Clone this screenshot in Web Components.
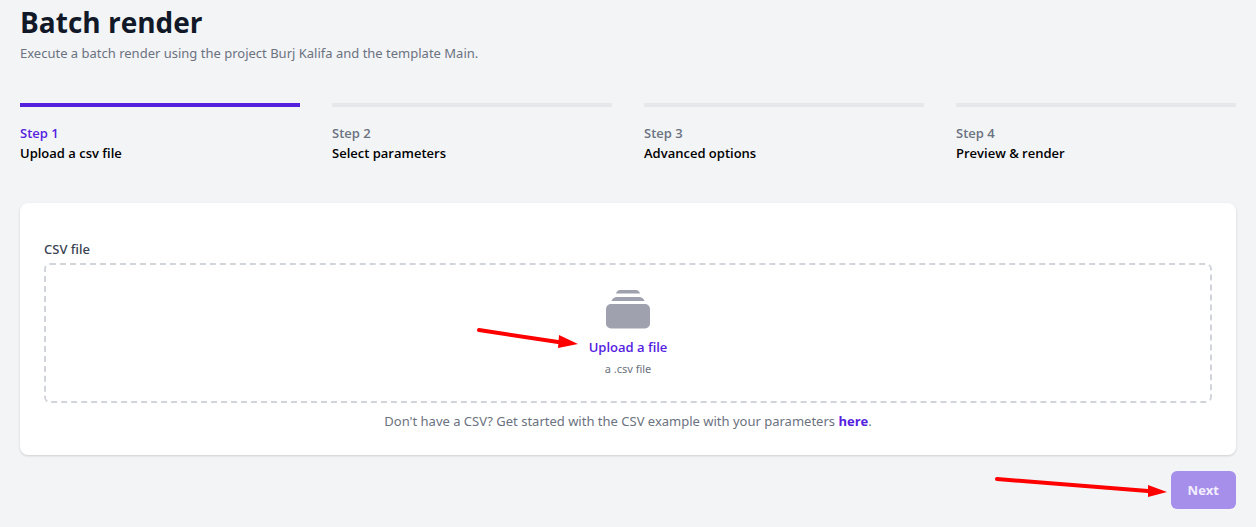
<!DOCTYPE html>
<html lang="en">
<head>
<meta charset="utf-8">
<meta name="viewport" content="width=device-width, initial-scale=1">
<title>Batch render</title>
<style>
  body {
    margin: 0;
    background: #f3f4f6;
    color: #000;
    font: 13px/20px "Noto Sans", "Open Sans", sans-serif;
    --accent: #5521df;
    --muted: #6b7280;
    --strong: "Open Sans", "Noto Sans", sans-serif;
  }
</style>
</head>
<body>
<batch-page></batch-page>
<script>
const define = (name, html) => customElements.define(name, class extends HTMLElement {
  constructor() {
    super();
    this.attachShadow({ mode: "open" }).innerHTML = html;
  }
});

define("page-heading", `
  <style>
    :host { display: block; }
    h1 { margin: 0; font-family: var(--strong); font-size: 28px; line-height: 36px; font-weight: 700; color: #111827; }
    p { margin: 0; padding-top: 3px; color: var(--muted); }
  </style>
  <h1><slot name="title"></slot></h1>
  <p><slot></slot></p>`);

define("step-item", `
  <style>
    :host { display: block; flex: 1; font-family: var(--strong); font-weight: 600; --bar: #e5e7eb; --label: var(--muted); }
    :host([current]) { --bar: var(--accent); --label: var(--accent); }
    a { display: flex; flex-direction: column; padding-top: 16px; border-top: 4px solid var(--bar); color: inherit; text-decoration: none; }
    .label { color: var(--label); }
  </style>
  <a href="#"><span class="label"><slot name="label"></slot></span><span><slot></slot></span></a>`);

define("step-list", `
  <style>
    :host { display: block; }
    nav { display: flex; gap: 32px; }
  </style>
  <nav aria-label="Progress"><slot></slot></nav>`);

define("file-drop", `
  <style>
    :host { display: block; }
    .name { display: block; font-weight: 500; color: #374151; }
    .zone { margin-top: 4px; padding: 24px; border: 2px dashed #d1d5db; border-radius: 6px; display: flex; flex-direction: column; align-items: center; }
    svg { width: 48px; height: 48px; fill: #9fa1ae; }
    .pick { position: relative; font-family: var(--strong); font-weight: 600; color: var(--accent); cursor: pointer; }
    input { position: absolute; width: 1px; height: 1px; margin: 0; opacity: 0; }
    .hint { margin: 0; padding-top: 4px; font-size: 11px; line-height: 16px; color: var(--muted); }
  </style>
  <label class="name" for="file"><slot name="name"></slot></label>
  <div class="zone">
    <svg viewBox="0 0 48 48" aria-hidden="true">
      <path d="M12 4.600Q13 1 16 1H32Q35 1 36 4.600Z"/>
      <path d="M7.500 12Q9 8 13 8H35Q39 8 40.500 12Z"/>
      <rect x="2" y="15" width="44" height="24.500" rx="5"/>
    </svg>
    <label class="pick"><slot></slot><input id="file" type="file" accept=".csv"></label>
    <p class="hint"><slot name="hint"></slot></p>
  </div>`);

define("form-card", `
  <style>
    :host { display: block; padding: 36px 24px 24px; background: #fff; border-radius: 8px; box-shadow: 0 1px 3px #0000001a, 0 1px 2px #0000000f; }
  </style>
  <slot></slot>`);

define("next-button", `
  <style>
    :host { display: flex; }
    button { padding: 8px 16px; border: 1px solid transparent; border-radius: 6px; background: #a68feb; color: #f2eefc; font: 700 13px/20px var(--strong); }
  </style>
  <button type="button" disabled><slot></slot></button>`);

define("pointer-arrow", `
  <style>
    :host { position: absolute; pointer-events: none; }
    svg { display: block; overflow: visible; fill: #f00; stroke: #f00; stroke-linecap: round; }
    :host([kind="next"]) .upload, :host([kind="upload"]) .next { display: none; }
  </style>
  <svg class="upload" width="102" height="22" aria-hidden="true">
    <path d="M3 3L82 15" stroke-width="4"/><path d="M83 8L102 17L82 21Z" stroke="none"/>
  </svg>
  <svg class="next" width="172" height="20" aria-hidden="true">
    <path d="M2 3L153 15" stroke-width="4"/><path d="M153 9L172 16L153 21Z" stroke="none"/>
  </svg>`);

define("batch-page", `
  <style>
    :host { display: block; padding: 4px 20px 18px; }
    step-list { margin: 40px 0; }
    .upload, .actions { position: relative; }
    .example { margin: 0; padding-top: 8px; text-align: center; color: var(--muted); }
    .example a { color: var(--accent); font-family: var(--strong); font-weight: 700; text-decoration: none; }
    .actions { display: flex; justify-content: flex-end; margin-top: 16px; }
    [kind="upload"] { top: 88px; right: calc(50% + 50px); }
    [kind="next"] { top: 5px; right: 69px; }
  </style>
  <main>
    <page-heading><span slot="title">Batch render</span>Execute a batch render using the project Burj Kalifa and the template Main.</page-heading>
    <step-list>
      <step-item current><span slot="label">Step 1</span>Upload a csv file</step-item>
      <step-item><span slot="label">Step 2</span>Select parameters</step-item>
      <step-item><span slot="label">Step 3</span>Advanced options</step-item>
      <step-item><span slot="label">Step 4</span>Preview &amp; render</step-item>
    </step-list>
    <form-card>
      <div class="upload">
        <file-drop><span slot="name">CSV file</span>Upload a file<span slot="hint">a .csv file</span></file-drop>
        <pointer-arrow kind="upload"></pointer-arrow>
      </div>
      <p class="example">Don't have a CSV? Get started with the CSV example with your parameters <a href="#">here</a>.</p>
    </form-card>
    <div class="actions">
      <next-button>Next</next-button>
      <pointer-arrow kind="next"></pointer-arrow>
    </div>
  </main>`);
</script>
</body>
</html>
